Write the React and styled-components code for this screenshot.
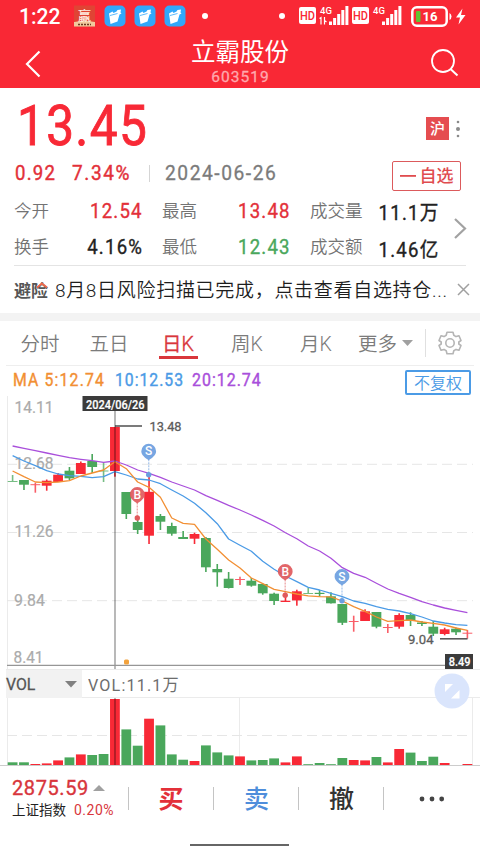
import React from 'react';
import styled, { createGlobalStyle } from 'styled-components';

const colors = {
  header: '#f92835',
  up: '#f82936',
  upText: '#e33039',
  down: '#4aa75c',
  grey: '#7b7b7b',
  dark: '#222222',
  orange: '#f28f33',
  blue: '#4b9be6',
  purple: '#a94fdb',
  line: '#ebebeb',
};

const GlobalStyle = createGlobalStyle`
  body {
    margin: 0;
    background: #ffffff;
  }
  * {
    box-sizing: border-box;
  }
`;

const Screen = styled.div`
  width: 480px;
  height: 854px;
  display: flex;
  flex-direction: column;
  overflow: hidden;
  background: #ffffff;
  font-family: Roboto, 'Noto Sans CJK SC', sans-serif;
  color: ${colors.dark};
`;

const Text = styled.span`
  display: inline-block;
  white-space: nowrap;
  font-size: ${(props) => props.$size}px;
  font-weight: ${(props) => props.$weight || 400};
  letter-spacing: ${(props) => props.$spacing || 0}px;
  color: ${(props) => props.$color || 'inherit'};
  -webkit-text-stroke: ${(props) => props.$stroke || 0}px currentColor;
  transform: scaleX(${(props) => props.$stretch || 1});
  transform-origin: ${(props) => props.$origin || 'left'} center;
`;

const StatusBar = styled.div`
  height: 32px;
  flex: none;
  display: flex;
  align-items: center;
  padding-left: 19px;
  background: ${colors.header};
  color: #ffffff;
  line-height: 32px;
`;

const Clock = styled.div`
  width: 55px;
  padding-top: 3px;
`;

const Header = styled.div`
  height: 56px;
  flex: none;
  display: grid;
  grid-template-columns: 70px 1fr 70px;
  background: ${colors.header};
  color: #ffffff;
`;

const HeaderSide = styled.div`
  display: flex;
  align-items: center;
  justify-content: ${(props) => props.$justify};
  padding: ${(props) => props.$padding};
`;

const HeaderTitle = styled.div`
  display: flex;
  flex-direction: column;
  align-items: center;
  padding-top: 5px;
  line-height: 32px;
`;

const HeaderCode = styled.div`
  line-height: 15px;
  color: #ffa9ae;
  padding-left: 1px;
`;

const Quote = styled.div`
  height: 177px;
  flex: none;
  padding-top: 12px;
`;

const PriceRow = styled.div`
  height: 52px;
  line-height: 54px;
  display: flex;
  align-items: center;
  justify-content: space-between;
  padding: 0 19px 0 17px;
  color: ${colors.up};
`;

const Market = styled.div`
  display: flex;
  align-items: center;
  gap: 6px;
  padding-top: 5px;
`;

const MarketBadge = styled.div`
  width: 23px;
  height: 23px;
  line-height: 24px;
  text-align: center;
  background: #e54d50;
  color: #ffffff;
`;

const ChangeRow = styled.div`
  height: 41px;
  line-height: 41px;
  display: flex;
  align-items: center;
  padding: 2px 19px 0 15px;
`;

const Change = styled.div`
  width: ${(props) => props.$width}px;
  color: ${colors.upText};
`;

const ShortDivider = styled.div`
  width: 1px;
  height: ${(props) => props.$height}px;
  background: ${(props) => props.$color || '#d5d5d5'};
`;

const QuoteDate = styled.div`
  flex: 1;
  padding-left: 15px;
  color: ${colors.grey};
`;

const FavButton = styled.button`
  width: 69px;
  height: 30px;
  margin-top: 4px;
  padding: 0;
  display: flex;
  align-items: center;
  justify-content: center;
  gap: 4px;
  border: 1px solid #dc5a5c;
  border-radius: 2px;
  background: none;
  color: #e04c4f;
  font-family: inherit;
  line-height: 30px;
`;

const Stats = styled.div`
  display: flex;
  align-items: center;
  padding-left: 14px;
`;

const StatGrid = styled.div`
  display: grid;
  grid-template-columns: 129px 129px 129px;
  grid-auto-rows: 36px;
  column-gap: 19px;
  line-height: 37px;
`;

const Stat = styled.div`
  display: flex;
  justify-content: space-between;
`;

const StatValue = styled.div`
  padding-top: ${(props) => props.$drop || 0}px;
  color: ${(props) => props.$color};
`;

const Notice = styled.div`
  height: 48px;
  flex: none;
  margin: 0 10px 0 14px;
  display: flex;
  align-items: center;
  line-height: 48px;
  background: linear-gradient(#e4e4e4, #e4e4e4) 0 0 / 452px 1px no-repeat;
`;

const NoticeLogo = styled.div`
  width: 41px;
  padding-top: 4px;
  display: flex;
  position: relative;
  color: #555555;
`;

const LogoRoof = styled.svg`
  position: absolute;
  left: 21px;
  top: 18px;
`;

const NoticeText = styled.div`
  width: 403px;
  padding-top: 5px;
  color: #1d1d1d;
`;

const Band = styled.div`
  height: 8px;
  flex: none;
  background: #f3f3f3;
`;

const Tabs = styled.div`
  height: 45px;
  flex: none;
  margin: 0 6px;
  display: flex;
  align-items: center;
  border-bottom: 1px solid #eeeeee;
`;

const Tab = styled.div`
  width: 69px;
  height: 44px;
  line-height: 48px;
  display: flex;
  justify-content: center;
  padding-right: 1px;
  color: ${(props) => (props.$active ? '#d9363b' : colors.grey)};
  background: ${(props) =>
    props.$active
      ? 'linear-gradient(#d9363b, #d9363b) 15px 35px / 39px 3px no-repeat'
      : 'none'};
`;

const MoreTab = styled.div`
  width: 68px;
  padding-left: 1px;
  margin-left: 6px;
  height: 44px;
  line-height: 44px;
  display: flex;
  align-items: center;
  gap: 5px;
  color: ${colors.grey};
`;

const MoreLabel = styled.div`
  padding-top: 4px;
`;

const Gear = styled.svg`
  margin-left: 12px;
`;

const MaRow = styled.div`
  height: 30px;
  flex: none;
  display: flex;
  align-items: flex-start;
  padding-left: 13px;
  line-height: 28px;
`;

const Ma = styled.div`
  width: ${(props) => props.$width}px;
  color: ${(props) => props.$color};
`;

const AdjustButton = styled.button`
  width: 66px;
  height: 25px;
  margin: 4px 0 0 131px;
  padding: 0;
  border: 2px solid ${colors.blue};
  border-radius: 2px;
  background: none;
  color: ${colors.blue};
  font-family: inherit;
  line-height: 24px;
`;

const Chart = styled.svg`
  display: block;
  flex: none;
`;

const VolumeHead = styled.div`
  height: 29px;
  flex: none;
  position: relative;
  display: flex;
  line-height: 31px;
  margin-left: 6px;
  border-top: 1px solid ${colors.line};
  border-bottom: 1px solid ${colors.line};
  color: #6d6d6d;
`;

const VolumeSelect = styled.div`
  width: 76px;
  height: 28px;
  display: flex;
  align-items: center;
  justify-content: space-between;
  padding-right: 5px;
  margin-right: 6px;
  background: #f2f2f2;
  color: #555555;
`;

const ExpandButton = styled.svg`
  position: absolute;
  left: 428px;
  top: 3px;
`;

const Footer = styled.div`
  height: 65px;
  flex: none;
  display: flex;
  align-items: center;
`;

const Index = styled.div`
  width: 127.500px;
  padding: 1px 0 0 12px;
`;

const IndexRow = styled.div`
  display: flex;
  align-items: center;
  gap: ${(props) => props.$gap}px;
  height: ${(props) => props.$height}px;
  line-height: ${(props) => props.$height}px;
`;

const Action = styled.div`
  width: ${(props) => props.$width || 84}px;
  padding-left: ${(props) => props.$shift || 0}px;
  padding-top: ${(props) => props.$drop || 0}px;
  display: flex;
  justify-content: center;
  align-items: center;
  line-height: 64px;
  color: ${(props) => props.$color};
`;

const HomeBar = styled.div`
  width: 99px;
  height: 2px;
  margin: 13px 0 0 190px;
  background: #666666;
`;

// [kind, open/close top, open/close bottom, high, low]
const candles = [
  ['d', 481, 482, 475, 482],
  ['d', 480, 484.7, 480, 490],
  ['u', 484.2, 485.2, 482.7, 492.7],
  ['u', 480.7, 485.7, 479.5, 490.7],
  ['u', 474.7, 482, 473, 482],
  ['d', 470.7, 478.3, 467, 480],
  ['u', 463, 474, 461.5, 474],
  ['d', 461, 467, 454, 473],
  ['d', 470.5, 471.5, 463, 482],
  ['u', 427, 471, 427, 476.7],
  ['d', 492, 514, 492, 519],
  ['d', 522, 530, 519, 534],
  ['u', 491.8, 535.7, 476.7, 544],
  ['d', 516, 521.7, 514, 530],
  ['d', 526, 533.7, 522.7, 535.7],
  ['d', 537, 539, 531, 539],
  ['u', 534, 538.7, 532.7, 544],
  ['d', 538, 567.3, 537, 572],
  ['d', 569, 572.3, 564, 586.7],
  ['d', 578.7, 588, 572, 588.5],
  ['u', 579, 580, 576.7, 585],
  ['d', 580.7, 585.7, 578, 586.7],
  ['d', 584, 593.3, 583.5, 594.7],
  ['d', 593.7, 601, 592.7, 605],
  ['u', 600.7, 602, 596, 602],
  ['u', 591.3, 600.4, 589.7, 605.7],
  ['d', 593, 594, 588, 594],
  ['d', 592.8, 594, 590, 596.5],
  ['d', 596.3, 603.3, 592.3, 603.5],
  ['d', 604, 622.8, 604, 625],
  ['u', 621, 622, 615.7, 631.7],
  ['u', 611.3, 621, 609.3, 621],
  ['d', 612, 626.7, 612, 628.3],
  ['u', 627, 628, 624, 633],
  ['u', 615, 626.7, 613.3, 628.7],
  ['d', 615, 621, 612.3, 626],
  ['d', 622.5, 624, 621, 626],
  ['d', 626.7, 633.7, 621, 636],
  ['u', 629.3, 634, 627.7, 635.3],
  ['d', 628.7, 632.3, 627.5, 635],
  ['u', 632.7, 633.7, 630, 638.7],
];

const ma5 = [
  471, 476.7, 482, 482.7, 482, 480.7, 476, 473, 470, 461.7, 468.7, 482, 487.3,
  497.3, 518, 523.3, 524.3, 539, 549.3, 560, 568, 578, 583.7, 589.3, 591.7, 594,
  595.8, 596.6, 596.8, 601, 606.7, 611.3, 617, 621.3, 620.7, 620, 622, 623.3,
  625, 628, 630.3,
];

const ma10 = [
  455.7, 461, 465.7, 470.7, 474, 475.7, 476.3, 477.7, 476.7, 471.7, 475, 479,
  480, 483.7, 490, 496, 503.3, 512.7, 523.7, 539, 545.3, 551.3, 561.3, 569.3,
  576, 581.7, 587.3, 590, 593.3, 596.7, 601, 603.3, 606.7, 609.3, 611, 613.7,
  617, 621, 623, 624.7, 625.3,
];

const ma20 = [
  446, 448.3, 450.7, 453, 455.3, 457.7, 459.3, 460.7, 462.3, 461, 465, 470,
  473.3, 477.3, 482, 486, 490, 495.7, 500.3, 505.3, 510, 515, 520.3, 526, 532.7,
  538.7, 546, 551, 558.3, 567.7, 573.3, 577.3, 583.3, 589, 593.3, 597.3, 601.7,
  605, 608, 610.3, 612.7,
];

// bar heights; the kind of each bar is the kind of its candle
const volumes = [
  2.7, 2.7, 1, 1.6, 4.6, 7.6, 10.6, 10, 11, 66, 35.6, 19.3, 46.3, 39.6, 10.6,
  5.3, 4, 19.6, 12.6, 9.6, 8.6, 4.6, 5, 6.6, 2.6, 8.6, 0.8, 2, 0.8, 7, 5, 4.6, 8,
  2.6, 16, 12.4, 4, 8.3, 2, 0, 1,
];

const x = (i) => 12.6 + i * 11.37;

const fill = (kind) => (kind === 'u' ? colors.up : colors.down);

const points = (values) => values.map((y, i) => `${x(i)},${y}`).join(' ');

const Label = ({ at, y, width, size = 16, color = '#ababab', weight = 400, stroke = 0.2, children }) => (
  <text
    x={at}
    y={y}
    fontSize={size}
    fontWeight={weight}
    fill={color}
    stroke={color}
    strokeWidth={stroke}
    textLength={width}
    lengthAdjust="spacingAndGlyphs"
  >
    {children}
  </text>
);

const Marker = ({ at, y, dot, kind }) => {
  const color = kind === 'B' ? '#e0595c' : '#6b9ee0';
  return (
    <g>
      <line x1={at} y1={y + 8} x2={at} y2={dot} stroke={color} opacity="0.5" strokeWidth="1.4" strokeDasharray="2 1" />
      <path
        d={`M${at - 7.4} ${y}a7.4 7.4 0 1 1 14.8 0c0 4-4 6.600-7.400 9c-3.400-2.400-7.400-5-7.400-9z`}
        fill={color}
        opacity="0.92"
      />
      <text x={at} y={y + 4.2} fontSize="12" fontWeight="500" fill="#ffffff" textAnchor="middle">
        {kind}
      </text>
      <circle cx={at} cy={dot} r="2.700" fill={color} />
    </g>
  );
};

const AppIcon = () => (
  <svg width="22" height="22" viewBox="0 0 22 22">
    <rect width="21" height="21" y="0.500" fill="#e04434" />
    <path d="M0 17c5-1.500 16-1.500 21 0v4.500H0z" fill="#f1c99d" />
    <path d="M4 19.500h13" stroke="#6d3a24" strokeWidth="1.500" strokeDasharray="2 1" />
    <text x="10.500" y="14.500" fontSize="13" fontWeight="500" fill="#fff0e4" textAnchor="middle">
      赢
    </text>
  </svg>
);

const FolderIcon = () => (
  <svg width="30" height="22" viewBox="0 0 30 22">
    <rect x="0.500" y="0.500" width="21" height="21" rx="5" fill="#31a8fb" />
    <path d="M5 8.500l3.500-2 1 1.500 3-1.500 1-1.500 3.500-0.500-0.500 3 1 1-2 1-2 7-7 2.500z" fill="#ffffff" />
    <path d="M6 10.500l7.500-2" stroke="#31a8fb" strokeWidth="0.800" />
  </svg>
);

const Bars = ({ left }) => (
  <g fill="#ffffff">
    {[3.5, 7, 11, 15, 19].map((h, i) => (
      <rect key={h} x={left + i * 4.1} y={25 - h} width="3" height={h} />
    ))}
  </g>
);

const Hd = ({ left }) => (
  <g>
    <rect x={left} y="7" width="17" height="17" rx="2" fill="#ffffff" />
    <text x={left + 8.5} y="20" fontSize="13" fontWeight="500" fill={colors.header} textAnchor="middle" textLength="15" lengthAdjust="spacingAndGlyphs">
      HD
    </text>
  </g>
);

const StatusIcons = () => (
  <svg width="286" height="32" viewBox="194 0 286 32">
    <circle cx="205" cy="16" r="3" fill="#ffffff" />
    <circle cx="282" cy="16" r="3" fill="#ffffff" />
    <Hd left={299} />
    <text x="320" y="13.500" fontSize="9.500" fontWeight="500" fill="#ffffff">4G</text>
    <path d="M319.500 18.500l1.500-1v7M324.500 17v7.500M324.500 20.500l2 1.500" stroke="#ffffff" strokeWidth="1.200" fill="none" />
    <Bars left={329} />
    <Hd left={352} />
    <text x="373" y="13.500" fontSize="9.500" fontWeight="500" fill="#ffffff">4G</text>
    <Bars left={382} />
    <rect x="412.300" y="7.300" width="34.400" height="18.400" rx="4.500" fill="none" stroke="#ffffff" strokeWidth="2.500" />
    <rect x="416" y="11" width="4.500" height="11" rx="1" fill="#63c132" />
    <text x="422.500" y="21" fontSize="13.500" fontWeight="700" fill="#ffffff" textLength="15" lengthAdjust="spacingAndGlyphs">16</text>
    <path d="M449.500 13v7q2-1 2-3.500t-2-3.500z" fill="#ffffff" />
    <path d="M462.500 8.500l-6.500 9h4l-1.500 7 7-9.500h-4.500z" fill="#ffffff" />
  </svg>
);

const PriceChart = () => (
  <Chart width="480" height="273" viewBox="0 396 480 273">
    <line x1="7.500" y1="396" x2="7.500" y2="669" stroke={colors.line} />
    {[464.3, 532.5, 600.7].map((y) => (
      <line key={y} x1="7" y1={y} x2="473" y2={y} stroke="#e6e6e6" strokeDasharray="10 5" />
    ))}
    <Label at={14.5} y={413} width={39}>14.11</Label>
    <Label at={14.5} y={469} width={39}>12.68</Label>
    <Label at={14.5} y={537} width={39}>11.26</Label>
    <Label at={14} y={606} width={31}>9.84</Label>
    <Label at={13.5} y={663} width={30}>8.41</Label>
    {candles.map(([kind, top, bottom, high, low], i) => (
      <g key={i} fill={fill(kind)} opacity={bottom - top <= 1 ? 0.75 : 1}>
        <rect x={x(i) - 0.8} y={high} width="1.600" height={low - high} />
        <rect x={x(i) - 4.9} y={top} width="9.800" height={bottom - top} />
      </g>
    ))}
    <g fill="none" strokeWidth="1.300" strokeLinejoin="round">
      <polyline points={points(ma20)} stroke={colors.purple} />
      <polyline points={points(ma10)} stroke={colors.blue} />
      <polyline points={points(ma5)} stroke={colors.orange} />
    </g>
    <line x1="115" y1="426" x2="142" y2="426" stroke="#5a5a5a" strokeWidth="1.600" />
    <Label at={149.5} y={431} width={32} size={13.5} color="#5c5c5c" stroke={0.3}>13.48</Label>
    <line x1="440" y1="638.800" x2="467.500" y2="638.800" stroke="#5a5a5a" strokeWidth="1.600" />
    <Label at={408} y={644} width={25.5} size={13.5} color="#5c5c5c" stroke={0.3}>9.04</Label>
    <Marker at={137.3} y={494.5} dot={518} kind="B" />
    <Marker at={148.7} y={451.2} dot={474.7} kind="S" />
    <Marker at={285.2} y={571.5} dot={595.3} kind="B" />
    <Marker at={342} y={576.5} dot={600.7} kind="S" />
    <line x1="115" y1="411" x2="115" y2="669" stroke="#000000" strokeOpacity="0.350" strokeWidth="1.600" />
    <line x1="7" y1="665.300" x2="445" y2="665.300" stroke="#969696" strokeWidth="1.200" />
    <rect x="124" y="659.500" width="5" height="5" rx="1.500" fill="#f2a23c" />
    <rect x="82.500" y="396" width="65" height="15" fill="#3b3b3b" />
    <Label at={86} y={408.5} width={58.5} size={12.5} color="#ffffff" weight={500}>2024/06/26</Label>
    <rect x="445" y="654" width="28" height="15" fill="#3b3b3b" />
    <Label at={448.7} y={666} width={21.8} size={12.5} color="#ffffff" weight={500}>8.49</Label>
  </Chart>
);

const VolumeChart = () => (
  <Chart width="480" height="68" viewBox="0 698 480 68">
    <line x1="7.500" y1="698" x2="7.500" y2="766" stroke={colors.line} />
    <line x1="239.500" y1="698" x2="239.500" y2="766" stroke={colors.line} />
    <line x1="472.500" y1="698" x2="472.500" y2="766" stroke={colors.line} />
    <line x1="7" y1="735.500" x2="468" y2="735.500" stroke="#e6e6e6" strokeDasharray="10 5" />
    {volumes.map((h, i) => (
      <rect key={i} x={x(i) - 4.9} y={765 - h} width="9.800" height={h} fill={fill(candles[i][0])} />
    ))}
    <line x1="115" y1="698" x2="115" y2="766" stroke="#000000" strokeOpacity="0.350" strokeWidth="1.600" />
    <line x1="0" y1="765.500" x2="480" y2="765.500" stroke="#cccccc" />
  </Chart>
);

const stats = [
  { label: '今开', value: '12.54', color: colors.upText },
  { label: '最高', value: '13.48', color: colors.upText },
  { label: '成交量', value: '11.1万', color: colors.dark, drop: 2 },
  { label: '换手', value: '4.16%', color: colors.dark },
  { label: '最低', value: '12.43', color: colors.down },
  { label: '成交额', value: '1.46亿', color: colors.dark, drop: 3 },
];

const App = () => (
  <Screen>
    <GlobalStyle />
    <StatusBar>
      <Clock>
        <Text $size={21.500} $weight={500} $stretch={0.98}>1:22</Text>
      </Clock>
      <AppIcon />
      <svg width="8" height="1" />
      <FolderIcon />
      <FolderIcon />
      <FolderIcon />
      <StatusIcons />
    </StatusBar>
    <Header>
      <HeaderSide $justify="flex-start" $padding="7px 0 0 24px">
        <svg width="18" height="28" viewBox="0 0 18 28">
          <path d="M15.500 1.500L3 14l12.500 12.500" fill="none" stroke="#ffffff" strokeWidth="2.200" />
        </svg>
      </HeaderSide>
      <HeaderTitle>
        <Text $size={24.500} $weight={400}>立霸股份</Text>
        <HeaderCode>
          <Text $size={15.500} $spacing={1} $stroke={0.300}>603519</Text>
        </HeaderCode>
      </HeaderTitle>
      <HeaderSide $justify="flex-end" $padding="5px 21px 0 0">
        <svg width="28" height="28" viewBox="0 0 28 28">
          <circle cx="12" cy="12" r="11" fill="none" stroke="#ffffff" strokeWidth="1.800" />
          <path d="M19.500 20l7 6.500" stroke="#ffffff" strokeWidth="2" />
        </svg>
      </HeaderSide>
    </Header>
    <Quote>
      <PriceRow>
        <Text $size={56} $spacing={1.500} $stretch={0.885} $stroke={0.900}>13.45</Text>
        <Market>
          <MarketBadge>
            <Text $size={15} $weight={500}>沪</Text>
          </MarketBadge>
          <svg width="6" height="20" viewBox="0 0 6 20" fill="#8a8a8a">
            <circle cx="3" cy="3" r="1.300" />
            <circle cx="3" cy="10" r="2" />
            <circle cx="3" cy="17" r="1.300" />
          </svg>
        </Market>
      </PriceRow>
      <ChangeRow>
        <Change $width={57}>
          <Text $size={20} $spacing={1.300} $stretch={0.93} $stroke={0.400}>0.92</Text>
        </Change>
        <Change $width={77}>
          <Text $size={20} $spacing={1.700} $stretch={0.95} $stroke={0.400}>7.34%</Text>
        </Change>
        <ShortDivider $height={17} />
        <QuoteDate>
          <Text $size={20} $spacing={1.600} $stretch={0.96} $stroke={0.300}>2024-06-26</Text>
        </QuoteDate>
        <FavButton>
          <svg width="16" height="2">
            <rect width="16" height="1.800" fill="#e04c4f" />
          </svg>
          <Text $size={17} $weight={500}>自选</Text>
        </FavButton>
      </ChangeRow>
      <Stats>
        <StatGrid>
          {stats.map((s) => (
            <Stat key={s.label}>
              <Text $size={17.500} $weight={350} $color="#737373">{s.label}</Text>
              <StatValue $color={s.color} $drop={s.drop}>
                <Text $size={20} $spacing={1.300} $stretch={0.93} $stroke={0.350} $origin="right">
                  {s.value}
                </Text>
              </StatValue>
            </Stat>
          ))}
        </StatGrid>
        <svg width="30" height="24" viewBox="0 0 30 24">
          <path d="M16 2l10 9.500-10 9.500" fill="none" stroke="#a2a2a2" strokeWidth="2.200" />
        </svg>
      </Stats>
    </Quote>
    <Notice>
      <NoticeLogo>
        <Text $size={17} $weight={700}>避险</Text>
        <LogoRoof width="14" height="9" viewBox="0 0 14 9">
          <path d="M2 6.500l5-4 5 4" fill="none" stroke="#ee6a4e" strokeWidth="1.800" />
        </LogoRoof>
      </NoticeLogo>
      <NoticeText>
        <Text $size={19} $weight={350} $spacing={0.700}>8月8日风险扫描已完成，点击查看自选持仓...</Text>
      </NoticeText>
      <svg width="13" height="13" viewBox="0 0 13 13">
        <path d="M1 1l11 11M12 1L1 12" stroke="#a0a0a0" strokeWidth="1.500" />
      </svg>
    </Notice>
    <Band />
    <Tabs>
      {['分时', '五日', '日K', '周K', '月K'].map((name) => (
        <Tab key={name} $active={name === '日K'}>
          <Text $size={19.500} $weight={350} $stroke={name === '日K' ? 0.4 : 0}>{name}</Text>
        </Tab>
      ))}
      <MoreTab>
        <MoreLabel>
          <Text $size={19.500} $weight={350}>更多</Text>
        </MoreLabel>
        <svg width="11" height="6">
          <path d="M0 0h11l-5.500 6z" fill="#a0a0a0" />
        </svg>
      </MoreTab>
      <ShortDivider $height={28} $color="#e0e0e0" />
      <Gear width="24" height="24" viewBox="0 0 24 24" fill="none" stroke="#b5b5b5" strokeWidth="1.600" strokeLinejoin="round">
        <path d="M9 1.200h6l0.800 3.100 2.200 1.300 3-0.900 2 4.800-2.200 1.500v2l2.200 1.500-2 4.800-3-0.900-2.200 1.300-0.800 3.100h-6l-0.800-3.100-2.200-1.300-3 0.900-2-4.800 2.200-1.500v-2L1 9.500l2-4.800 3 0.900 2.200-1.300z" />
        <circle cx="12" cy="12" r="4.200" />
      </Gear>
    </Tabs>
    <MaRow>
      <Ma $width={102} $color={colors.orange}>
        <Text $size={17.500} $spacing={1.300} $stretch={0.9} $stroke={0.400}>MA 5:12.74</Text>
      </Ma>
      <Ma $width={77} $color={colors.blue}>
        <Text $size={17.500} $spacing={1.100} $stretch={0.9} $stroke={0.400}>10:12.53</Text>
      </Ma>
      <Ma $width={82} $color={colors.purple}>
        <Text $size={17.500} $spacing={1.100} $stretch={0.91} $stroke={0.400}>20:12.74</Text>
      </Ma>
      <AdjustButton>
        <Text $size={16} $weight={350}>不复权</Text>
      </AdjustButton>
    </MaRow>
    <PriceChart />
    <VolumeHead>
      <VolumeSelect>
        <Text $size={17} $stretch={0.93} $stroke={0.300}>VOL</Text>
        <svg width="12" height="7">
          <path d="M0 0h12l-6 6.500z" fill="#808080" />
        </svg>
      </VolumeSelect>
      <Text $size={17} $spacing={1.200} $stretch={0.95}>VOL:11.1万</Text>
      <ExpandButton width="36" height="36" viewBox="0 0 36 36">
        <circle cx="18" cy="18" r="17.500" fill="#dae5fc" />
        <path d="M11 11h8l-8 8zM25.500 17v8.500h-8.500z" fill="#ffffff" />
      </ExpandButton>
    </VolumeHead>
    <VolumeChart />
    <Footer>
      <Index>
        <IndexRow $height={22} $gap={4}>
          <Text $size={20} $spacing={0.600} $stroke={0.350} $color="#d8353c">2875.59</Text>
          <svg width="12" height="6">
            <path d="M0 6h12l-6-6z" fill="#a0a0a0" />
          </svg>
        </IndexRow>
        <IndexRow $height={23} $gap={8}>
          <Text $size={13.500}>上证指数</Text>
          <Text $size={14} $spacing={0.500} $color="#d8353c">0.20%</Text>
        </IndexRow>
      </Index>
      <ShortDivider $height={23} $color="#c4c4c4" />
      <Action $color="#e33039" $shift={1} $drop={3}>
        <Text $size={25} $weight={700}>买</Text>
      </Action>
      <ShortDivider $height={23} $color="#c4c4c4" />
      <Action $color="#4f8edb" $shift={2} $drop={3}>
        <Text $size={25} $weight={500}>卖</Text>
      </Action>
      <ShortDivider $height={23} $color="#c4c4c4" />
      <Action $color="#333333" $shift={2} $drop={3}>
        <Text $size={25} $weight={500}>撤</Text>
      </Action>
      <ShortDivider $height={23} $color="#c4c4c4" />
      <Action $width={96} $shift={1}>
        <svg width="26" height="6" fill="#444444">
          <circle cx="3" cy="3" r="2.400" />
          <circle cx="13" cy="3" r="2.400" />
          <circle cx="22.700" cy="3" r="2.400" />
        </svg>
      </Action>
    </Footer>
    <HomeBar />
  </Screen>
);

export default App;
